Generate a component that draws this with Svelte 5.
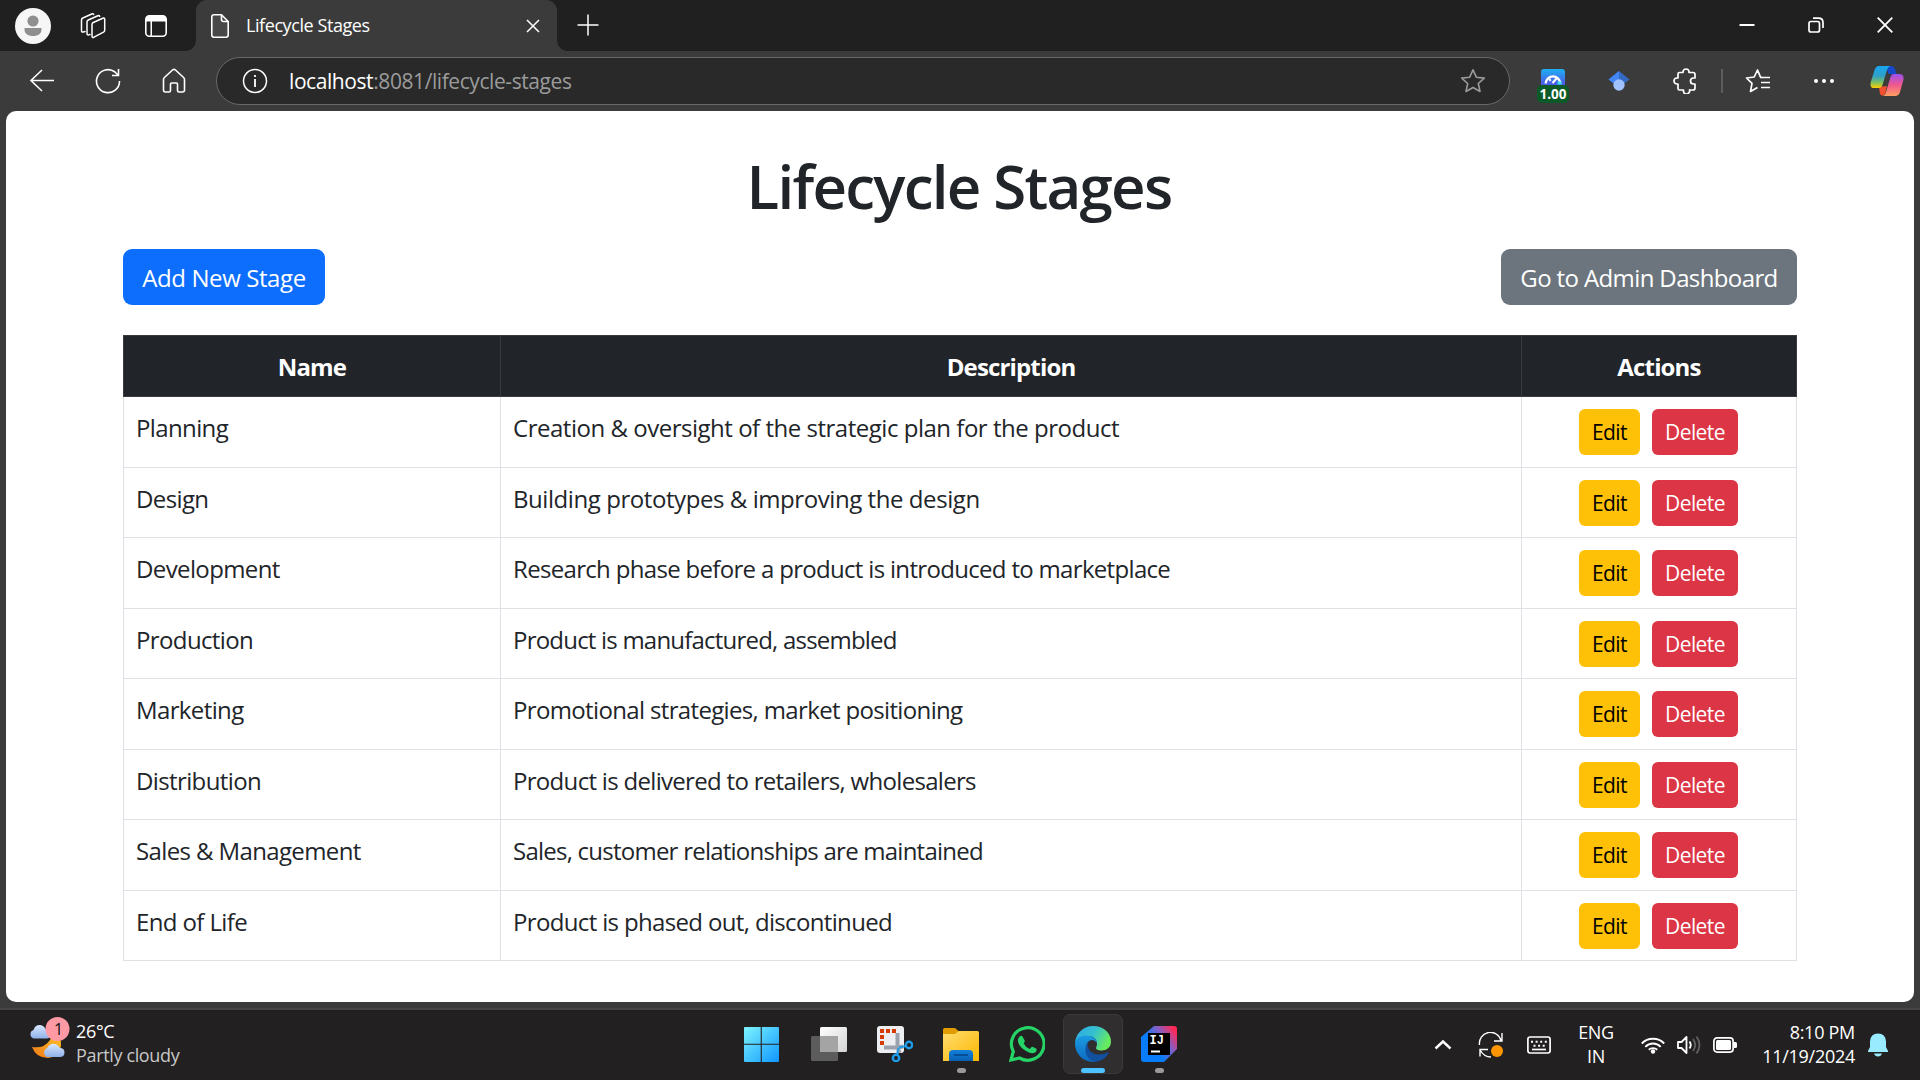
<script>
  // Each stage: name, description, description tracking in px
  const stages = [
    ['Planning', 'Creation & oversight of the strategic plan for the product', -0.48],
    ['Design', 'Building prototypes & improving the design', -0.43],
    ['Development', 'Research phase before a product is introduced to marketplace', -0.68],
    ['Production', 'Product is manufactured, assembled', -0.79],
    ['Marketing', 'Promotional strategies, market positioning', -0.65],
    ['Distribution', 'Product is delivered to retailers, wholesalers', -0.69],
    ['Sales & Management', 'Sales, customer relationships are maintained', -0.76],
    ['End of Life', 'Product is phased out, discontinued', -0.65],
  ];
</script>

<div class="screen">
  <header class="strip">
    <div class="strip-left">
      <svg class="avatar" width="36" height="36" viewBox="0 0 36 36"><circle cx="18" cy="18" r="18" fill="#f6f6f6" /><circle cx="18" cy="13" r="5.600" fill="#8f8f8f" /><path d="M9.500 20h17v1.500c0 4.500-4 6.500-8.500 6.500s-8.500-2-8.500-6.500z" fill="#8f8f8f" /></svg>
      <svg class="spaces" width="26" height="26" viewBox="0 0 26 26" fill="none" stroke="#fff" stroke-width="1.500" stroke-linejoin="round" stroke-linecap="round"><path d="M12 11.500q0-1.400 1.300-2l9.500-4.200q1.900-.7 1.900 1.200v10.700q0 1.300-1.200 2l-9.500 5Q12 25 12 23z" /><path d="M10 21.500l-1.200.3q-1.800.4-1.800-1.300V9q0-1.400 1.300-2l9.500-4.200q1.400-.5 1.900.5" /><path d="M5 18.500l-1.700.5Q1.500 19.400 1.500 17.500V7q0-1.400 1.300-2l9-4q1.400-.5 1.900.5" /></svg>
      <svg class="vtabs" width="22" height="26" viewBox="0 0 22 26"><rect x=".8" y="2.800" width="20.400" height="20.400" rx="3.500" fill="none" stroke="#fff" stroke-width="1.600" /><path d="M1 8.500V6q0-3 3-3h14q3 0 3 3v2.500zM5.500 8h1.500v15H5.500z" fill="#fff" /></svg>
    </div>
    <div class="tab">
      <svg width="18" height="24" viewBox="0 0 18 24" fill="#484848" stroke="#fff" stroke-width="1.600" stroke-linejoin="round"><path d="M3 .8h7.500l6.700 6.700V21q0 2.200-2.200 2.200H3Q.8 23.200.8 21V3Q.8.800 3 .8z" /><path d="M10.500 1v4.500q0 2 2 2H17" fill="none" /></svg>
      <span class="tab-title">Lifecycle Stages</span>
      <svg width="14" height="14" viewBox="0 0 14 14" stroke="#fff" stroke-width="1.500"><path d="M1 1l12 12M13 1L1 13" /></svg>
    </div>
    <svg class="plus" width="22" height="22" viewBox="0 0 22 22" stroke="#fff" stroke-width="1.500"><path d="M11 .5v21M.5 11h21" /></svg>
    <div class="controls">
      <svg width="16" height="16" viewBox="0 0 16 16"><path d="M.5 7h15v2H.5z" fill="#fff" /></svg>
      <svg width="16" height="16" viewBox="0 0 16 16" fill="none" stroke="#fff" stroke-width="1.700"><rect x="1" y="4.500" width="10.500" height="10.500" rx="2" /><path d="M5 1.200h5.500q4.500 0 4.500 4.500V11" /></svg>
      <svg width="16" height="16" viewBox="0 0 16 16" stroke="#fff" stroke-width="1.800"><path d="M.7.700l14.600 14.600M15.300.700L.7 15.300" /></svg>
    </div>
  </header>

  <nav class="toolbar">
    <div class="nav-icons">
      <svg width="26" height="26" viewBox="0 0 26 26" fill="none" stroke="#fff" stroke-width="1.600"><path d="M25 12.500H2M13 2L2 12.500 13 23" /></svg>
      <svg width="26" height="26" viewBox="0 0 26 26" fill="none" stroke="#fff" stroke-width="1.600"><path d="M24.500 13A11.500 11.500 0 1 1 20 4l3 3M23.500 1v6.500H17" /></svg>
      <svg width="26" height="26" viewBox="0 0 26 26" fill="none" stroke="#fff" stroke-width="1.600" stroke-linejoin="round"><path d="M2.500 11.500q0-1.200.9-2L11.500 2q1.500-1.200 3 0l8.100 7.500q.9.800.9 2V22q0 2-2 2H18q-1.500 0-1.500-1.500V16q0-1-1-1h-5q-1 0-1 1v6.500Q9.500 24 8 24H4.500q-2 0-2-2z" /></svg>
    </div>
    <div class="address">
      <svg width="26" height="26" viewBox="0 0 26 26" fill="none" stroke="#fff" stroke-width="1.500"><circle cx="13" cy="13" r="11.500" /><path d="M13 11v8M13 7v2" stroke-width="1.800" /></svg>
      <span class="url"><b>localhost</b>:8081/lifecycle-stages</span>
      <svg width="26" height="26" viewBox="0 0 26 26" fill="none" stroke="#9b9b9b" stroke-width="1.600" stroke-linejoin="round"><path d="M13 1.800l3.300 7.400 8 .9-6 5.400 1.700 8-7-4-7 4 1.700-8-6-5.400 8-.9z" /></svg>
    </div>
    <div class="extensions">
      <div class="speed">
        <svg width="24" height="24" viewBox="0 0 24 24"><defs><linearGradient id="sp" x1="0" y1="0" x2="0" y2="1"><stop offset="0" stop-color="#1cb0f0" /><stop offset=".6" stop-color="#4a5ee8" /></linearGradient></defs><rect width="24" height="24" rx="3" fill="url(#sp)" /><path d="M4.500 14.500a7.600 8.500 0 0 1 15 0" fill="none" stroke="#fff" stroke-width="2.200" /><path d="M16.500 14h4" stroke="#3fe0e8" stroke-width="3" /><path d="M11.500 14l4.500-5M8.500 10l1 2" stroke="#fff" stroke-width="2" /></svg>
        <span class="rate">1.00</span>
      </div>
      <svg class="scholar" width="22" height="22" viewBox="0 0 22 22"><path d="M11 1L.5 9.500l6 4.500h9l6-4.500z" fill="#356ac3" /><path d="M11 1L.5 9.500l6 4.500L11 10z" fill="#4285f4" /><circle cx="11" cy="15" r="5.700" fill="#a0c3ff" /></svg>
      <svg class="puzzle" width="26" height="26" viewBox="0 0 26 26" fill="none" stroke="#fff" stroke-width="1.700" stroke-linejoin="round"><path d="M5 6q0-1.500 1.500-1.500H10V4a3 3 0 0 1 6 0v.5h4q2 0 2 2V10h-1.500a3 3 0 0 0 0 6H22v4q0 2-2 2h-3.500v-.2a3 3 0 0 1-6 2V22H6.500Q5 22 5 20.500V16H4a3 3 0 0 1 0-6h1z" /></svg>
      <i class="divider"></i>
      <svg class="favs" width="26" height="26" viewBox="0 0 26 26" fill="none" stroke="#fff" stroke-width="1.700" stroke-linejoin="round"><path d="M17 9.500l-1.500-.3L12.500 2 9.200 9l-7.700 1 5.500 5.400L5.500 23.500l7-4M15 9.500h10M16 14.500h9M16 19.500h9" /></svg>
      <svg class="dots" width="20" height="6" viewBox="0 0 20 6" fill="#fff"><circle cx="2" cy="3" r="2" /><circle cx="10" cy="3" r="2" /><circle cx="18" cy="3" r="2" /></svg>
      <svg width="34" height="32" viewBox="0 0 34 32"><defs><linearGradient id="c1" x1="0" y1="0" x2="0" y2="1"><stop offset="0" stop-color="#18a8f0" /><stop offset=".45" stop-color="#2f9fc8" /><stop offset=".75" stop-color="#7fc060" /><stop offset="1" stop-color="#ffd000" /></linearGradient><linearGradient id="c2" x1="0" y1="0" x2="0" y2="1"><stop offset="0" stop-color="#9a50f0" /><stop offset=".5" stop-color="#f0588c" /><stop offset="1" stop-color="#ffa060" /></linearGradient></defs><path d="M16 1h5q3 0 4 3l1.500 5h-8z" fill="#1649c8" /><path d="M9 22l8-1-2 8q-3 3-5 0z" fill="#f45030" /><path d="M9 1h11q-2 1-3 4l-4.500 15q-1 3-4 3H4Q-.5 23 .8 17L4.500 5Q6 1 9 1z" fill="url(#c1)" /><path d="M24 9h5q5.500 0 4.400 6L30 27q-1.200 4-5 4H12q3 0 4-4l4.500-15q1-3 3.500-3z" fill="url(#c2)" /></svg>
    </div>
  </nav>

  <main class="page">
    <h1>Lifecycle Stages</h1>
    <div class="buttons">
      <button class="btn primary">Add New Stage</button>
      <button class="btn secondary">Go to Admin Dashboard</button>
    </div>
    <table>
      <thead>
        <tr><th class="c1">Name</th><th class="c2">Description</th><th class="c3">Actions</th></tr>
      </thead>
      <tbody>
        {#each stages as [name, description, tracking]}
          <tr>
            <td>{name}</td>
            <td style:letter-spacing="{tracking}px">{description}</td>
            <td class="cell-actions"><div class="actions"><button class="sm edit">Edit</button><button class="sm delete">Delete</button></div></td>
          </tr>
        {/each}
      </tbody>
    </table>
  </main>

  <footer class="taskbar">
    <div class="weather">
      <svg width="44" height="44" viewBox="0 0 44 44"><defs><linearGradient id="cl" x1="0" y1="0" x2="0" y2="1"><stop offset="0" stop-color="#d8e8ff" /><stop offset="1" stop-color="#8fb0e8" /></linearGradient><linearGradient id="mo" x1="0" y1="1" x2="1" y2="0"><stop offset="0" stop-color="#f07818" /><stop offset="1" stop-color="#ffc828" /></linearGradient></defs><path d="M4 30q12 2 18-7 3-4 2-9 10 4 9 15-2 11-13 12Q8 41 4 30z" fill="url(#mo)" /><path d="M5.500 21.500a4.500 4.500 0 0 1 0-8.500q1.500-5 6-5 4 0 6 4 5 0 5 5t-5 4.500z" fill="url(#cl)" /><path d="M19 40a4.800 4.800 0 0 1 0-8.800q2-4.500 6.500-4.500 4 0 6 4 5 .3 5 4.800t-5 4.500z" fill="url(#cl)" /><circle cx="29.500" cy="12" r="12" fill="#ff99a4" /><text x="30.500" y="17.500" text-anchor="middle" font-size="16" fill="#111">1</text></svg>
      <div class="wtext"><span>26°C</span><span class="dim">Partly cloudy</span></div>
    </div>

    <div class="apps">
      <div class="app"><svg width="36" height="36" viewBox="0 0 36 36"><defs><linearGradient id="wn" x1="0" y1="0" x2="1" y2="1"><stop offset="0" stop-color="#7df4ff" /><stop offset="1" stop-color="#0f97ff" /></linearGradient></defs><path d="M1 1H16.700v16.700H0V2q0-1 1-1zM17.800 1H34q1 0 1 1v15.700H17.800zM0 18.800H16.700V36H1q-1 0-1-1zM17.800 18.800H35v16.200q0 1-1 1H17.800z" fill="url(#wn)" /></svg></div>
      <div class="app"><svg width="36" height="36" viewBox="0 0 36 36"><defs><linearGradient id="tv" x1="0" y1="0" x2="1" y2="1"><stop offset="0" stop-color="#fff" /><stop offset="1" stop-color="#d4d4d4" /></linearGradient></defs><rect x="9" y="1" width="27" height="25" rx="1.500" fill="url(#tv)" /><rect y="10" width="27" height="25" rx="1.500" fill="#5c5c5c" /><path d="M9 10h18v16H9z" fill="#a4a4a4" /></svg></div>
      <div class="app"><svg width="36" height="36" viewBox="0 0 36 36"><rect width="27" height="27" rx="3" fill="#eceef1" /><path d="M3 5h17M5 9v11" stroke="#d83b01" stroke-width="4" stroke-dasharray="4 2" /><path d="M20.500 7v14l2 6M7 21.500h14l5-1" fill="none" stroke="#9aa3ad" stroke-width="4" /><path d="M22 21.500l7-1.500M21.500 22l-1.500 7" stroke="#1c9cea" stroke-width="2" /><circle cx="32" cy="19" r="3.200" fill="none" stroke="#1c9cea" stroke-width="2.400" /><circle cx="19" cy="32" r="3.200" fill="none" stroke="#1c9cea" stroke-width="2.400" /></svg></div>
      <div class="app"><svg width="36" height="36" viewBox="0 0 36 36"><defs><linearGradient id="fo" x1="0" y1="0" x2="1" y2="1"><stop offset="0" stop-color="#ffdc70" /><stop offset="1" stop-color="#fcb800" /></linearGradient><linearGradient id="fb" x1="0" y1="0" x2="0" y2="1"><stop offset="0" stop-color="#1080dc" /><stop offset="1" stop-color="#0a60b0" /></linearGradient></defs><path d="M0 3.500Q0 2 1.500 2H11q1.500 0 2.500 1.200L15.500 5v8H0z" fill="#e09c00" /><path d="M0 8h11q1.500 0 2.500-1.200l.5-.6q1-1.200 2.500-1.200H34.500Q36 5 36 6.500V35H0z" fill="url(#fo)" /><path d="M6 35V28q0-4 4-4h16q4 0 4 4v7z" fill="url(#fb)" /><path d="M11 29h14" stroke="#064a90" stroke-width="1.800" /></svg><i class="run"></i></div>
      <div class="app"><svg width="36" height="36" viewBox="0 0 36 36"><path d="M2 34l2.300-8.500A16.300 16.300 0 1 1 10.500 32z" fill="none" stroke="#25d366" stroke-width="3.200" /><path d="M10.500 10.500q1.600-1.500 3 0l2.200 4q.5 1-1 3 2 4 6 5.500 2-2.500 2.800-2.200l4 2q.8 1.600-1 3.500-3.500 2.400-9-1Q11 22 9 16q-.6-3.500 1.500-5.500z" fill="#25d366" /></svg></div>
      <div class="app active"><svg width="36" height="36" viewBox="0 0 36 36"><defs><linearGradient id="ed" x1="0" y1="0" x2="1" y2=".4"><stop offset="0" stop-color="#2ea8e8" /><stop offset=".55" stop-color="#35c1d0" /><stop offset="1" stop-color="#66eb5e" /></linearGradient><linearGradient id="eb" x1="0" y1="0" x2="0" y2="1"><stop offset="0" stop-color="#1b9de2" /><stop offset="1" stop-color="#0c68c0" /></linearGradient></defs><path d="M0 17A18 18 0 0 1 18 0c11 0 18 7.500 18 15.500 0 6-4.500 9-9.500 9-4 0-5.500-1.500-5.500-2.500 0-.8 1-1.500 1-4.500 0-4-3.500-7.500-9-7.500C6 10 1 13 0 17z" fill="url(#ed)" /><path d="M0 18c0-5 5-8.500 11-8.500 7 0 11 4 11 8-1-2-3-3.500-5-3.500-4 0-6 4-6 8 0 6.500 5 11.500 11 13q-2 .9-4 .9A18 18 0 0 1 0 18z" fill="url(#eb)" /><path d="M14 15.500c-3 4.500 0 13 10 13 4 0 7-1.500 8.500-2 1-.3 1.500.3 1 1-3 5-8 8-13.500 8.300C12 34 9 26 11 20q1-3 3-4.500z" fill="#10509e" /></svg><i class="run wide"></i></div>
      <div class="app"><svg width="36" height="36" viewBox="0 0 36 36"><defs><linearGradient id="ij" x1="0" y1=".7" x2="1" y2="0"><stop offset=".3" stop-color="#087cfa" /><stop offset=".6" stop-color="#8060c8" /><stop offset=".9" stop-color="#fe2857" /></linearGradient></defs><path d="M13 0h20q3 0 3 3v20L23 36H3q-3 0-3-3V11z" fill="url(#ij)" /><path d="M7 7h22v22H7z" fill="#000" /><text x="8.600" y="18" class="ij">IJ</text><path d="M10 24.500h9v2h-9z" fill="#fff" /></svg><i class="run"></i></div>
    </div>

    <div class="tray">
      <svg width="18" height="12" viewBox="0 0 18 12" fill="none" stroke="#fff" stroke-width="2.400"><path d="M1.500 9.500L9 2.500l7.500 7" /></svg>
      <svg class="sync" width="26" height="26" viewBox="0 0 26 26" fill="none" stroke="#fff" stroke-width="1.400"><path d="M1.500 13A11 11 0 0 1 23 8.500M24 1v8h-8M2 24.500v-7h8M2 18q4 7 11 7" /><circle cx="19" cy="19" r="6" fill="#ff9500" stroke="none" /></svg>
      <svg class="kb" width="24" height="18" viewBox="0 0 24 18" fill="none" stroke="#fff" stroke-width="1.700"><rect x=".9" y="1" width="22.200" height="16" rx="2.200" /><path d="M4 5.800h16M6.500 9.800h13" stroke-width="2" stroke-dasharray="2 2.600" /><path d="M5 13.500h14" /></svg>
      <div class="lang"><span>ENG</span><span>IN</span></div>
      <svg class="wifi" width="24" height="18" viewBox="0 0 24 18" fill="none" stroke="#fff" stroke-width="1.900"><path d="M.8 7.500a15.500 15.500 0 0 1 22.400 0M4.300 10.800a10.800 10.800 0 0 1 15.400 0M7.800 13.800a6 6 0 0 1 8.400 0" /><circle cx="12" cy="15.500" r="2.200" fill="#fff" stroke="none" /></svg>
      <svg class="vol" width="24" height="20" viewBox="0 0 24 20" fill="none" stroke="#fff" stroke-width="1.800" stroke-linejoin="round"><path d="M1 7h3.500L9.500 2v16l-5-5H1z" /><path d="M12.500 6.500q2.500 3.500 0 7" /><path d="M16 4q4.500 6 0 12M19.500 1.500q6 8.500 0 17" stroke="#606060" /></svg>
      <svg class="bat" width="24" height="16" viewBox="0 0 24 16"><rect x=".9" y=".9" width="19.200" height="14.200" rx="3" fill="none" stroke="#fff" stroke-width="1.700" /><rect x="3" y="3" width="15" height="10" rx="1.500" fill="#fff" /><path d="M21 5h1.500q1.500 0 1.500 1.500v3q0 1.500-1.500 1.500H21z" fill="#fff" /></svg>
      <div class="clock"><span>8:10 PM</span><span>11/19/2024</span></div>
      <svg width="20" height="24" viewBox="0 0 20 24" fill="#99ebff"><path d="M10 .5q7.500 0 8 8v5.500l2 4V19H0v-1l2-4V8.500q.5-8 8-8zM6 20.500h8q-1 3-4 3t-4-3z" /></svg>
    </div>
  </footer>
</div>

<style>
  :global(body) { background: #3b3b3b; }
  .screen { width: 1920px; height: 1080px; display: flex; flex-direction: column; overflow: hidden; background: #3b3b3b; font-family: 'Open Sans', 'Noto Sans', sans-serif; color: #fff; }
  svg { display: block; flex: none; }
  button { font-family: inherit; border: 0; margin: 0; white-space: nowrap; }

  .strip { height: 51px; flex: none; display: flex; align-items: center; background: #202020; }
  .strip-left { width: 196px; display: flex; align-items: center; padding-left: 15px; box-sizing: border-box; flex: none; }
  .spaces { margin-left: 29px; }
  .vtabs { margin-left: 39px; }
  .tab { position: relative; width: 361px; height: 51px; box-sizing: border-box; padding: 0 17px 0 15px; display: flex; align-items: center; background: #3b3b3b; border-radius: 11px 11px 0 0; }
  .tab::before, .tab::after { content: ''; position: absolute; bottom: 0; width: 10px; height: 10px; }
  .tab::before { left: -10px; background: radial-gradient(circle at 0 0, #202020 9.500px, #3b3b3b 10px); }
  .tab::after { right: -10px; background: radial-gradient(circle at 100% 0, #202020 9.500px, #3b3b3b 10px); }
  .tab-title { flex: 1; margin-left: 17px; padding-bottom: 1px; font-size: 18px; letter-spacing: -0.42px; }
  .plus { margin-left: 20px; margin-bottom: 2px; }
  .controls { margin-left: auto; display: flex; gap: 53px; padding: 0 27px 1px 0; }

  .toolbar { height: 60px; flex: none; display: flex; align-items: center; }
  .nav-icons { width: 216px; flex: none; display: flex; gap: 40px; padding-left: 29px; box-sizing: border-box; }
  .address { width: 1294px; height: 48px; box-sizing: border-box; display: flex; align-items: center; padding: 0 23px 0 25px; border: 1.500px solid #686868; border-radius: 24px; background: #292929; }
  .url { flex: 1; margin-left: 21px; font-size: 21px; letter-spacing: -0.42px; color: #9b9b9b; }
  .url b { font-weight: 400; color: #fff; }
  .extensions { flex: 1; display: flex; align-items: center; padding-left: 31px; }
  .speed { position: relative; }
  .rate { position: absolute; left: -4px; top: 16px; width: 32px; height: 18px; border-radius: 5px; background: #0b5a27; font-size: 13.500px; line-height: 19px; font-weight: 700; text-align: center; }
  .scholar { margin-left: 43px; }
  .puzzle { margin-left: 43px; }
  .divider { width: 2px; height: 24px; margin-left: 22px; background: #5c5c5c; }
  .favs { margin-left: 22px; }
  .dots { margin: 0 36px 0 43px; }

  .page { height: 891px; flex: none; box-sizing: border-box; margin: 0 6px; padding: 38px 117px 0; border-radius: 10px; background: #fff; color: #212529; font-size: 24px; line-height: 36px; }
  h1 { margin: 0 0 26px; font-size: 60px; line-height: 74px; font-weight: 600; text-align: center; text-indent: -2px; letter-spacing: -1.75px; }
  .buttons { display: flex; justify-content: space-between; margin-bottom: 30px; }
  .btn { height: 56px; border-radius: 9px; font-size: 24px; line-height: 36px; color: #fff; padding: 2px 0 0; }
  .primary { width: 202px; background: #0d6efd; letter-spacing: -0.4px; }
  .secondary { width: 296px; background: #6c757d; letter-spacing: -0.62px; }
  table { width: 1674px; table-layout: fixed; border-collapse: collapse; letter-spacing: -0.62px; }
  th { height: 61px; box-sizing: border-box; padding: 2px 0 0; border: 1px solid #373b3e; background: #212529; color: #fff; font-weight: 700; letter-spacing: -0.85px; }
  .c1 { width: 377px; }
  .c2 { width: 1021px; }
  td { height: 70.500px; box-sizing: border-box; padding: 13px 12px 0; border: 1px solid #dee2e6; vertical-align: top; }
  .cell-actions { padding: 12px 13px 0 12px; }
  .actions { display: flex; justify-content: center; gap: 12px; }
  .sm { height: 46px; padding: 1px 0 0; border-radius: 6px; font-size: 21px; line-height: 31px; letter-spacing: -0.6px; }
  .edit { width: 61px; background: #ffc107; color: #000; }
  .delete { width: 86px; background: #dc3545; color: #fff; }

  .taskbar { height: 70px; flex: none; display: grid; grid-template-columns: 732px 456px 1fr; margin-top: 6px; border-top: 2px solid #454545; background: #222021; font-size: 18px; line-height: 24px; }
  .weather { display: flex; padding: 7px 0 0 28px; gap: 4px; letter-spacing: -0.35px; }
  .wtext { display: flex; flex-direction: column; padding-top: 2px; }
  .dim { color: #c8c8c8; }
  .apps { display: flex; gap: 6px; padding: 4px 0 0 0; }
  .app { position: relative; width: 60px; height: 60px; flex: none; box-sizing: border-box; display: flex; justify-content: center; align-items: center; border-radius: 7px; }
  .app:nth-child(n + 2) { left: 1px; }
  .active { background: #302e2f; border: 1px solid #3b393a; }
  .run { position: absolute; bottom: 1px; width: 9px; height: 5px; border-radius: 3px; background: #9a9a9a; }
  .wide { width: 24px; bottom: 0; background: #4cc2ff; }
  .ij { font: 700 12px 'Liberation Mono', monospace; fill: #fff; }
  .tray { display: flex; align-items: center; padding: 0 0 1px 246px; letter-spacing: -0.35px; }
  .sync { margin-left: 26px; }
  .kb { margin-left: 23px; }
  .lang { width: 42px; margin: 0 0 1px 24px; display: flex; flex-direction: column; text-align: center; }
  .wifi { margin-left: 24px; }
  .vol { margin-left: 12px; }
  .bat { margin-left: 12px; }
  .clock { width: 104px; margin: 0 13px 2px 14px; display: flex; flex-direction: column; text-align: right; white-space: nowrap; letter-spacing: -0.28px; }
</style>
